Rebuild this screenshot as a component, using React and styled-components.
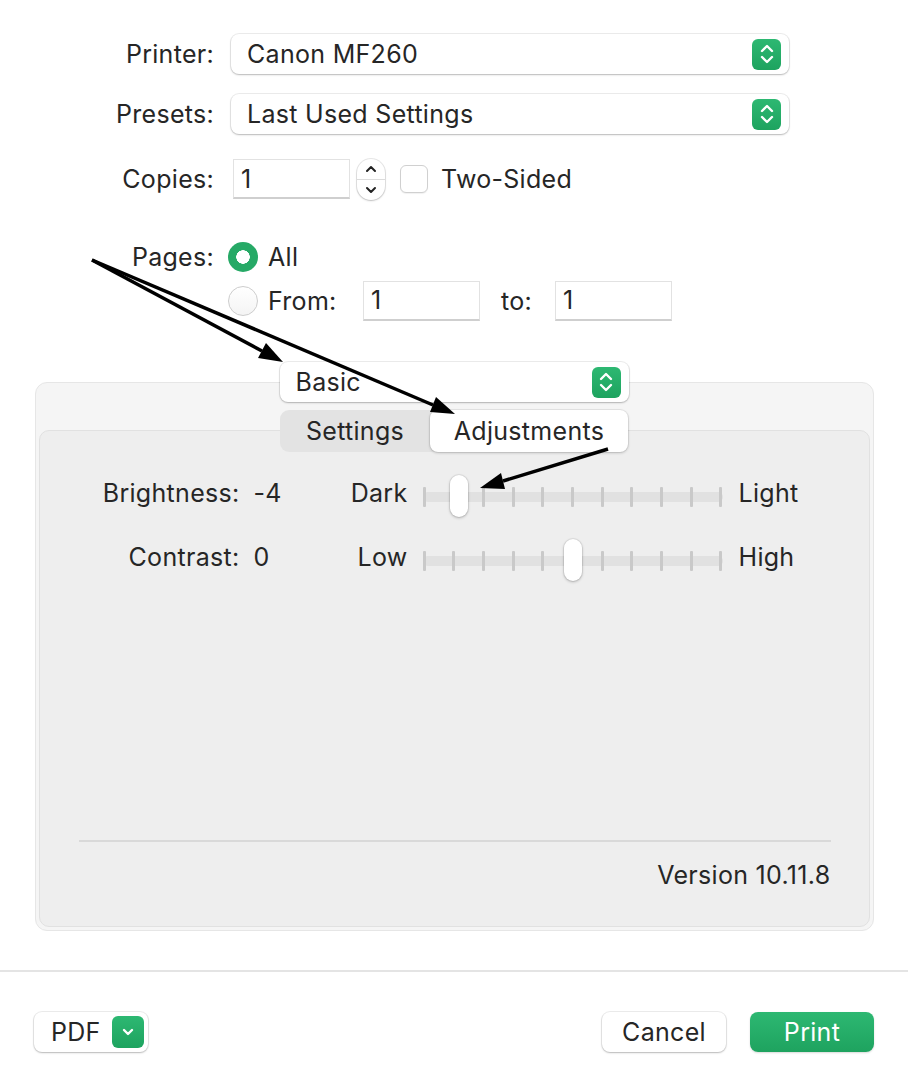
import styled, { createGlobalStyle } from 'styled-components'

const GlobalStyle = createGlobalStyle`
    body {
        margin: 0;
        background: #ffffff;
        font-family: Inter, "Noto Sans", "Liberation Sans", sans-serif;
        color: #262626;
    }
`

const sliders = [
    { label: 'Brightness:', value: '-4', min: 'Dark', max: 'Light', step: 1 },
    { label: 'Contrast:', value: '0', min: 'Low', max: 'High', step: 5 },
]

// annotation arrows: start, line end (base of head), head points
const arrows = [
    { x1: 92, y1: 260, x2: 262, y2: 351, head: '283,362 258,358 266,343' },
    { x1: 92, y1: 260, x2: 433, y2: 405, head: '455,414 430,412 436,397' },
    { x1: 608, y1: 449, x2: 503, y2: 481, head: '480,488 505,489 501,473' },
]

function Chevrons({ single }) {
    return (
        <svg width="16" height="22" viewBox="0 0 16 22" fill="none" stroke="white" strokeWidth="2.4" strokeLinecap="round" strokeLinejoin="round">
            {single ? (
                <path d="M4 9 L8 13 L12 9" />
            ) : (
                <>
                    <path d="M3 8 L8 3 L13 8" />
                    <path d="M3 14 L8 19 L13 14" />
                </>
            )}
        </svg>
    )
}

function Popup({ children, width }) {
    return (
        <PopupBox $width={width}>
            <span>{children}</span>
            <GreenStep>
                <Chevrons />
            </GreenStep>
        </PopupBox>
    )
}

function Slider({ step }) {
    const ticks = Array.from({ length: 11 })
    return (
        <Track>
            <Ticks>
                {ticks.map((_, i) => <Tick key={i} />)}
            </Ticks>
            <Thumb style={{ left: `${7.5 + 28.5 * step - 9}px` }} />
        </Track>
    )
}

function Arrows() {
    return (
        <Overlay width="908" height="1088" viewBox="0 0 908 1088">
            {arrows.map((a, i) => (
                <g key={i}>
                    <line x1={a.x1} y1={a.y1} x2={a.x2} y2={a.y2} stroke="#000" strokeWidth="3.5" />
                    <polygon points={a.head} fill="#000" />
                </g>
            ))}
        </Overlay>
    )
}

export default function App() {
    return (
        <>
            <GlobalStyle />
            <Dialog>
                <Row>
                    <Label>Printer:</Label>
                    <Popup width={558}>Canon MF260</Popup>
                </Row>
                <Row $top={20}>
                    <Label>Presets:</Label>
                    <Popup width={558}>Last Used Settings</Popup>
                </Row>
                <Row $top={25}>
                    <Label>Copies:</Label>
                    <Field $width={117} $left={19}>1</Field>
                    <Stepper>
                        <StepHalf>
                            <svg width="12" height="8" viewBox="0 0 12 8" fill="none" stroke="#222" strokeWidth="2" strokeLinecap="round" strokeLinejoin="round"><path d="M2 6 L6 2 L10 6" /></svg>
                        </StepHalf>
                        <StepHalf $bottom>
                            <svg width="12" height="8" viewBox="0 0 12 8" fill="none" stroke="#222" strokeWidth="2" strokeLinecap="round" strokeLinejoin="round"><path d="M2 2 L6 6 L10 2" /></svg>
                        </StepHalf>
                    </Stepper>
                    <Checkbox />
                    <Text $left={13}>Two-Sided</Text>
                </Row>
                <Row $top={43} $height={30}>
                    <Label>Pages:</Label>
                    <Radio $on $left={14} />
                    <Text $left={10}>All</Text>
                </Row>
                <Row $top={9} $height={39} $indent={228}>
                    <Radio />
                    <Text $left={10} $width={95}>From:</Text>
                    <Field $width={117}>1</Field>
                    <Text $left={21} $width={54}>to:</Text>
                    <Field $width={117}>1</Field>
                </Row>

                <Section>
                    <Raised>
                        <Popup width={349}>Basic</Popup>
                    </Raised>
                    <Panel>
                        <Raised>
                            <Segmented>
                                <Segment>Settings</Segment>
                                <Segment $active>Adjustments</Segment>
                            </Segmented>
                        </Raised>
                        <Inner>
                            <SliderGrid>
                                {sliders.map((s) => (
                                    <SliderRow key={s.label}>
                                        <SliderLabel>{s.label}</SliderLabel>
                                        <ValueCell>
                                            <span>{s.value}</span>
                                            <span>{s.min}</span>
                                        </ValueCell>
                                        <Slider step={s.step} />
                                        <MaxLabel>{s.max}</MaxLabel>
                                    </SliderRow>
                                ))}
                            </SliderGrid>
                            <Divider />
                            <Version>Version 10.11.8</Version>
                        </Inner>
                    </Panel>
                </Section>

                <Separator />

                <Footer>
                    <PdfButton>
                        PDF
                        <PdfChevron>
                            <Chevrons single />
                        </PdfChevron>
                    </PdfButton>
                    <Spacer />
                    <Button>Cancel</Button>
                    <Button $primary>Print</Button>
                </Footer>

                <Arrows />
            </Dialog>
        </>
    )
}

const Dialog = styled.div`
    position: relative;
    width: 908px;
    height: 1088px;
    padding-top: 34px;
    box-sizing: border-box;
    font-size: 25px;
    letter-spacing: 0.3px;
    overflow: hidden;
`

const Overlay = styled.svg`
    position: absolute;
    left: 0;
    top: 0;
    z-index: 5;
    pointer-events: none;
`

const Row = styled.div`
    display: flex;
    align-items: center;
    height: ${(p) => p.$height || 40}px;
    margin-top: ${(p) => p.$top || 0}px;
    padding-left: ${(p) => p.$indent || 0}px;
`

const Label = styled.div`
    width: 214px;
    text-align: right;
    flex-shrink: 0;
`

const Text = styled.div`
    margin-left: ${(p) => p.$left || 0}px;
    width: ${(p) => (p.$width ? `${p.$width}px` : 'auto')};
    flex-shrink: 0;
`

const PopupBox = styled.div`
    box-sizing: border-box;
    width: ${(p) => p.$width}px;
    height: 40px;
    margin-left: 17px;
    display: flex;
    align-items: center;
    justify-content: space-between;
    padding: 0 8px 0 16px;
    background: #fff;
    border-radius: 8px;
    box-shadow: 0 0 0 1px rgba(0, 0, 0, 0.07), 0 1px 2px rgba(0, 0, 0, 0.22);
`

const GreenStep = styled.div`
    width: 29px;
    height: 31px;
    border-radius: 6px;
    background: linear-gradient(#2db872, #1ea35f);
    display: flex;
    align-items: center;
    justify-content: center;
`

const Field = styled.div`
    box-sizing: border-box;
    width: ${(p) => p.$width}px;
    height: 40px;
    margin-left: ${(p) => p.$left || 0}px;
    padding-left: 7px;
    display: flex;
    align-items: center;
    background: #fff;
    border: 1px solid #e2e2e2;
    border-bottom: 2px solid #cfcfcf;
`

const Stepper = styled.div`
    box-sizing: border-box;
    width: 28px;
    height: 41px;
    margin-left: 7px;
    border-radius: 14px;
    background: #fff;
    box-shadow: 0 0 0 1px rgba(0, 0, 0, 0.09), 0 1px 2px rgba(0, 0, 0, 0.18);
    display: flex;
    flex-direction: column;
    overflow: hidden;
`

const StepHalf = styled.div`
    flex: 1;
    display: flex;
    align-items: center;
    justify-content: center;
    border-top: ${(p) => (p.$bottom ? '1px solid #dcdcdc' : 'none')};
`

const Checkbox = styled.div`
    box-sizing: border-box;
    width: 28px;
    height: 28px;
    margin-left: 15px;
    border-radius: 6px;
    background: #fff;
    border: 1px solid #d0d0d0;
    box-shadow: 0 1px 1px rgba(0, 0, 0, 0.06);
`

const Radio = styled.div`
    box-sizing: border-box;
    width: 30px;
    height: 30px;
    margin-left: ${(p) => p.$left || 0}px;
    border-radius: 50%;
    flex-shrink: 0;
    background: ${(p) => (p.$on ? 'radial-gradient(circle, #fff 0 6.5px, #26a966 7px)' : 'linear-gradient(#fff, #f4f4f4)')};
    border: ${(p) => (p.$on ? 'none' : '1px solid #cdcdcd')};
`

const Section = styled.div`
    margin-top: 42px;
    display: flex;
    flex-direction: column;
    align-items: center;
`

const Raised = styled.div`
    position: relative;
    z-index: 1;
    display: flex;
    justify-content: center;

    & > div {
        margin-left: 0;
    }
`

const Panel = styled.div`
    box-sizing: border-box;
    width: 839px;
    height: 549px;
    margin-top: -20px;
    padding: 27px 3px 3px;
    background: #f5f5f5;
    border: 1px solid #e6e6e6;
    border-radius: 12px;
    display: flex;
    flex-direction: column;
`

const Segmented = styled.div`
    display: flex;
    width: 348px;
    height: 42px;
    border-radius: 9px;
    background: #e3e3e3;
`

const Segment = styled.div`
    display: flex;
    align-items: center;
    justify-content: center;
    width: ${(p) => (p.$active ? 198 : 150)}px;
    border-radius: 8px;
    background: ${(p) => (p.$active ? '#fff' : 'transparent')};
    box-shadow: ${(p) => (p.$active ? '0 0 0 1px rgba(0,0,0,0.06), 0 1px 3px rgba(0,0,0,0.2)' : 'none')};
`

const Inner = styled.div`
    flex: 1;
    margin-top: -22px;
    background: #eeeeee;
    border: 1px solid #e1e1e1;
    border-radius: 10px;
    display: flex;
    flex-direction: column;
`

const SliderGrid = styled.div`
    margin-top: 41px;
    display: flex;
    flex-direction: column;
    gap: 22px;
`

const SliderRow = styled.div`
    display: flex;
    align-items: center;
    height: 42px;
`

const SliderLabel = styled.div`
    width: 200px;
    text-align: right;
`

const ValueCell = styled.div`
    width: 154px;
    margin-left: 14px;
    display: flex;
    justify-content: space-between;
`

const Track = styled.div`
    position: relative;
    width: 300px;
    height: 10px;
    margin: 8px 0 0 15px;
    border-radius: 5px;
    background: #e1e1e1;
`

const Ticks = styled.div`
    position: absolute;
    inset: -5px 0;
    display: flex;
    justify-content: space-between;
`

const Tick = styled.div`
    width: 3px;
    border-radius: 1px;
    background: #c9c9c9;
`

const Thumb = styled.div`
    position: absolute;
    top: -17px;
    width: 18px;
    height: 42px;
    border-radius: 9px;
    background: #fff;
    box-shadow: 0 0 0 1px rgba(0, 0, 0, 0.06), 0 1px 3px rgba(0, 0, 0, 0.25);
`

const MaxLabel = styled.div`
    margin-left: 16px;
`

const Divider = styled.div`
    margin: 262px 38px 0 39px;
    height: 2px;
    background: #d9d9d9;
`

const Version = styled.div`
    margin: 18px 38px 0 0;
    text-align: right;
`

const Separator = styled.div`
    margin-top: 39px;
    height: 2px;
    background: #e4e4e4;
`

const Footer = styled.div`
    display: flex;
    align-items: center;
    gap: 24px;
    margin-top: 40px;
    padding: 0 34px;
`

const Spacer = styled.div`
    flex: 1;
`

const PdfButton = styled.div`
    box-sizing: border-box;
    width: 114px;
    height: 40px;
    display: flex;
    align-items: center;
    justify-content: space-between;
    padding: 0 4px 0 17px;
    background: #fff;
    border-radius: 8px;
    box-shadow: 0 0 0 1px rgba(0, 0, 0, 0.07), 0 1px 2px rgba(0, 0, 0, 0.22);
`

const PdfChevron = styled(GreenStep)`
    width: 32px;
    height: 32px;
`

const Button = styled.div`
    box-sizing: border-box;
    width: 124px;
    height: 40px;
    display: flex;
    align-items: center;
    justify-content: center;
    border-radius: 8px;
    color: ${(p) => (p.$primary ? '#fff' : '#262626')};
    background: ${(p) => (p.$primary ? 'linear-gradient(#2db872, #1ea35f)' : '#fff')};
    box-shadow: ${(p) => (p.$primary ? '0 1px 2px rgba(0,0,0,0.15)' : '0 0 0 1px rgba(0,0,0,0.07), 0 1px 2px rgba(0,0,0,0.22)')};
`
